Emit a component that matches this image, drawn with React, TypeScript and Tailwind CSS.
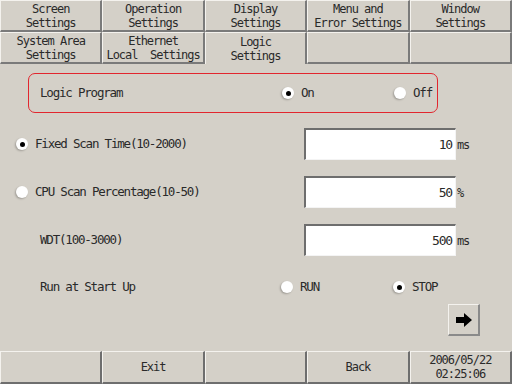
const font = { fontFamily: '"DejaVu Sans Mono", "Liberation Mono", monospace' };

function Tab({ lines, active }: { lines: string[]; active?: boolean }) {
  return (
    <div
      className={
        active
          ? "flex flex-col items-center justify-center pt-[1px] border-t border-l border-[#f4f2ee] border-r-2 border-r-[#7a7a7a] bg-[#d4d0c8] text-[12px] leading-[14px] tracking-[-1px] text-[#2a2a2a]"
          : "flex flex-col items-center justify-center pt-[1px] border-t border-l border-[#f4f2ee] border-r-2 border-b-2 border-r-[#7a7a7a] border-b-[#7a7a7a] bg-[#d4d0c8] text-[12px] leading-[14px] tracking-[-1px] text-[#2a2a2a]"
      }
    >
      {lines.map((l) => (
        <span key={l} className="block h-[14px] whitespace-pre">{l}</span>
      ))}
    </div>
  );
}

function Radio({ on }: { on?: boolean }) {
  return (
    <span className="flex h-[12px] w-[12px] items-center justify-center rounded-full bg-white shadow-[-1px_1px_2px_rgba(0,0,0,0.25)]">
      {on && <span className="h-[5px] w-[5px] rounded-full bg-black" />}
    </span>
  );
}

function Field({ value, unit }: { value: string; unit: string }) {
  return (
    <div className="flex items-center">
      <div className="flex h-[32px] w-[152px] items-center justify-end border-t-2 border-l-2 border-[#6e6e6e] border-r border-b border-r-[#f4f4f4] border-b-[#f4f4f4] bg-white pr-[3px] text-[13px] tracking-[-1.2px] text-[#2a2a2a]">
        {value}
      </div>
      <span className="ml-[1px] mt-[2px] text-[12px] tracking-[-1.2px] text-[#2a2a2a]">{unit}</span>
    </div>
  );
}

function Bottom({ label, two }: { label?: string; two?: string }) {
  return (
    <div className="flex flex-col items-center justify-center border-t border-l border-[#f4f2ee] border-r-2 border-b-2 border-r-[#6e6e6e] border-b-[#6e6e6e] text-[12px] leading-[14px] tracking-[-1px] text-[#2a2a2a]">
      {label && <span className="block h-[14px]">{label}</span>}
      {two && <span className="block h-[14px]">{two}</span>}
    </div>
  );
}

export default function App() {
  return (
    <div className="flex h-[384px] w-[512px] flex-col bg-[#d4d0c8]" style={font}>
      <div className="grid h-[64px] grid-cols-5 grid-rows-2">
        <Tab lines={["Screen", "Settings"]} />
        <Tab lines={["Operation", "Settings"]} />
        <Tab lines={["Display", "Settings"]} />
        <Tab lines={["Menu and", "Error Settings"]} />
        <Tab lines={["Window", "Settings"]} />
        <Tab lines={["System Area", "Settings"]} />
        <Tab lines={["Ethernet", "Local  Settings"]} />
        <Tab lines={["Logic", "Settings"]} active />
        <Tab lines={[]} />
        <Tab lines={[]} />
      </div>

      <div className="flex flex-1 flex-col text-[12.5px] tracking-[-1.2px] text-[#2a2a2a]">
        <div className="ml-[28px] mt-[9px] flex h-[40px] w-[410px] items-center rounded-[7px] border-[1.5px] border-[#e2262e] pl-[11px]">
          <span className="w-[242px]">Logic Program</span>
          <Radio on />
          <span className="ml-[7px] w-[93px]">On</span>
          <Radio />
          <span className="ml-[7px]">Off</span>
        </div>

        <div className="mt-[15px] flex h-[32px] items-center">
          <div className="flex w-[304px] items-center pl-[16px]">
            <Radio on />
            <span className="ml-[7px]">Fixed Scan Time(10-2000)</span>
          </div>
          <Field value="10" unit="ms" />
        </div>

        <div className="mt-[16px] flex h-[32px] items-center">
          <div className="flex w-[304px] items-center pl-[16px]">
            <Radio />
            <span className="ml-[7px]">CPU Scan Percentage(10-50)</span>
          </div>
          <Field value="50" unit="%" />
        </div>

        <div className="mt-[16px] flex h-[32px] items-center">
          <span className="w-[304px] pl-[40px]">WDT(100-3000)</span>
          <Field value="500" unit="ms" />
        </div>

        <div className="mt-[16px] flex h-[30px] items-center">
          <span className="w-[281px] pl-[40px]">Run at Start Up</span>
          <Radio />
          <span className="ml-[7px] w-[93px]">RUN</span>
          <Radio on />
          <span className="ml-[7px]">STOP</span>
        </div>

        <div className="mt-[2px] flex justify-end pr-[32px]">
          <div className="flex h-[32px] w-[32px] items-center justify-center border-t border-l border-[#f4f2ee] border-r-2 border-b-2 border-r-[#8a8a8a] border-b-[#8a8a8a]">
            <svg width="18" height="16" viewBox="0 0 18 16">
              <path d="M1 5h8V1l8 7-8 7v-4H1z" fill="#000" />
            </svg>
          </div>
        </div>
      </div>

      <div className="grid h-[33px] grid-cols-5">
        <Bottom />
        <Bottom label="Exit" />
        <Bottom />
        <Bottom label="Back" />
        <Bottom label="2006/05/22" two="02:25:06" />
      </div>
    </div>
  );
}
